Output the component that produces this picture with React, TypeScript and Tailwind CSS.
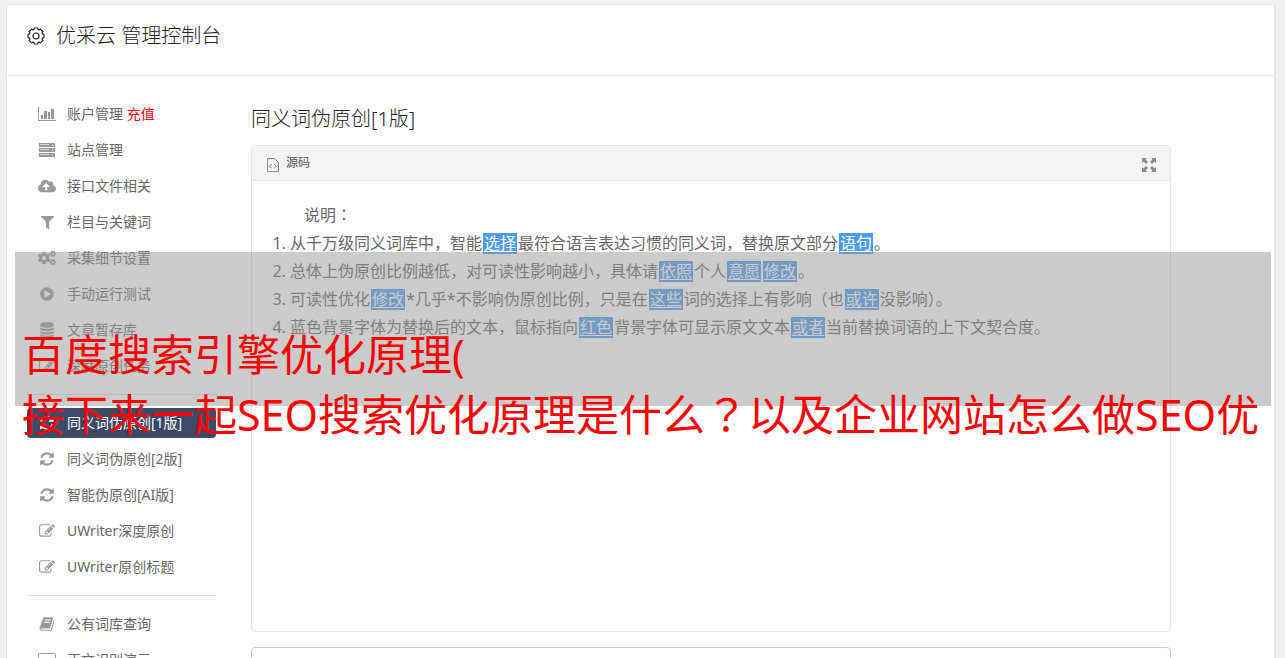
import type { ReactNode } from 'react';
import { FaCloudUploadAlt, FaCogs, FaFilter, FaPlayCircle } from 'react-icons/fa';

const EDIT_PATH =
  'M888 1184l116-116-152-152-116 116v56h96v96h56zm440-720q-16-16-33 1l-350 350q-17 17-1 33t33-1l350-350q17-17 1-33zm80 594v190q0 119-84.5 203.5t-203.5 84.5h-832q-119 0-203.5-84.5t-84.5-203.5v-832q0-119 84.5-203.5t203.5-84.5h832q63 0 117 25 15 7 18 23 3 17-9 29l-49 49q-14 14-32 8-23-6-45-6h-832q-66 0-113 47t-47 113v832q0 66 47 113t113 47h832q66 0 113-47t47-113v-126q0-13 9-22l64-64q15-15 35-7t20 29zm-96-738l288 288-672 672h-288v-288zm444 132l-92 92-288-288 92-92q28-28 68-28t68 28l152 152q28 28 28 68t-28 68z';
const REFRESH_PATH =
  'M1639 1056q0 5-1 7-64 268-268 434.5t-478 166.5q-146 0-282.5-55t-243.5-157l-129 129q-19 19-45 19t-45-19-19-45v-448q0-26 19-45t45-19h448q26 0 45 19t19 45-19 45l-137 137q71 66 161 102t187 36q134 0 250-65t186-179q11-17 53-117 8-23 30-23h192q13 0 22.5 9.5t9.5 22.5zm25-800v448q0 26-19 45t-45 19h-448q-26 0-45-19t-19-45 19-45l138-138q-148-137-349-137-134 0-250 65t-186 179q-11 17-53 117-8 23-30 23h-199q-13 0-22.5-9.5t-9.5-22.5v-7q65-268 270-434.5t480-166.5q146 0 284 55.5t245 156.5l130-129q19-19 45-19t45 19 19 45z';
const DATABASE_PATH =
  'M896 768q237 0 443-43t325-127v170q0 69-103 128t-280 93.5-385 34.5-385-34.5-280-93.5-103-128v-170q119 84 325 127t443 43zm0 768q237 0 443-43t325-127v170q0 69-103 128t-280 93.5-385 34.5-385-34.5-280-93.5-103-128v-170q119 84 325 127t443 43zm0-384q237 0 443-43t325-127v170q0 69-103 128t-280 93.5-385 34.5-385-34.5-280-93.5-103-128v-170q119 84 325 127t443 43zm0-1152q208 0 385 34.5t280 93.5 103 128v128q0 69-103 128t-280 93.5-385 34.5-385-34.5-280-93.5-103-128v-128q0-69 103-128t280-93.5 385-34.5z';
const BOOK_PATH =
  'M1703 478q40 57 18 129l-275 906q-19 64-76.5 107.5t-122.5 43.5h-923q-77 0-148.5-53.5t-99.5-131.5q-24-67-2-127 0-4 3-27t4-37q1-8-3-21.5t-3-19.5q2-11 8-21t16.5-23.5 16.5-23.5q23-38 45-91.5t30-91.5q3-10 .5-30t-.5-28q3-11 17-28t17-23q21-36 42-92t25-90q1-9-2.5-32t.5-28q4-13 22-30.5t22-22.5q19-26 42.5-84.5t27.5-96.5q1-8-3-25.5t-2-26.5q2-8 9-18t18-23 17-21q8-12 16.5-30.5t15-35 16-36 19.5-32 26.5-23.5 36-11.5 47.5 5.5l-1 3q38-9 51-9h761q74 0 114 56t18 130l-274 906q-36 119-71.5 153.5t-128.5 34.5h-869q-27 0-38 15-11 16-1 43 24 70 144 70h923q29 0 56-15.5t35-41.5l300-987q7-22 5-57 38 15 59 43zm-1064 2q-4 13 2 22.5t20 9.5h608q13 0 25.5-9.5t16.5-22.5l21-64q4-13-2-22.5t-20-9.5h-608q-13 0-25.5 9.5t-16.5 22.5zm-83 256q-4 13 2 22.5t20 9.5h608q13 0 25.5-9.5t16.5-22.5l21-64q4-13-2-22.5t-20-9.5h-608q-13 0-25.5 9.5t-16.5 22.5z';

function Glyph({ d }: { d: string }) {
  return (
    <svg className="w-4 h-4" viewBox="0 0 1792 1792" fill="currentColor" aria-hidden="true">
      <path d={d} />
    </svg>
  );
}

function GearIcon() {
  return (
    <svg className="w-[18px] h-[18px]" viewBox="0 0 18 18" fill="none" stroke="currentColor" strokeWidth="1.2" strokeLinejoin="round" aria-hidden="true">
      <path d="M7.3 1L10.7 1L11.1 2.400L12.1 2.900L13.500 2.100L15.900 4.500L15.100 5.900L15.600 6.900L17 7.300L17 10.700L15.600 11.100L15.100 12.100L15.900 13.500L13.500 15.900L12.100 15.100L11.100 15.600L10.700 17L7.300 17L6.900 15.600L5.900 15.100L4.500 15.900L2.100 13.500L2.900 12.100L2.400 11.100L1 10.700L1 7.300L2.400 6.900L2.900 5.900L2.100 4.500L4.500 2.100L5.900 2.900L6.900 2.400Z" />
      <circle cx="9" cy="9" r="3" />
    </svg>
  );
}

function ChartIcon() {
  return (
    <svg className="w-[18px] h-[14px]" viewBox="0 0 18 14" fill="currentColor" aria-hidden="true">
      <path d="M0 0h1v13h17v1H0zM3 8h2v4H3zM6 4h3v8H6zM10 5h2v7h-2zM13 2h3v10h-3z" />
    </svg>
  );
}

function ServerIcon() {
  return (
    <svg className="w-4 h-[14px]" viewBox="0 0 16 14" aria-hidden="true">
      <path fill="currentColor" d="M0 0h16v4H0zM0 5h16v4H0zM0 10h16v4H0z" />
      <path fill="#fff" fillOpacity=".6" d="M1 1h9v1H1zM1 6h9v1H1zM1 11h9v1H1zM13 1h1v2h-1zM13 6h1v2h-1zM13 11h1v2h-1z" />
    </svg>
  );
}

function LaptopIcon() {
  return (
    <svg className="w-[18px] h-4" viewBox="0 0 18 16" fill="none" stroke="currentColor" aria-hidden="true">
      <rect x=".5" y="1.5" width="17" height="11" rx="1" />
      <path d="M6 15h6" />
    </svg>
  );
}

type Item = { label: string; icon: ReactNode; badge?: string; active?: boolean };

const GROUPS: Item[][] = [
  [
    { label: '账户管理', icon: <ChartIcon />, badge: '充值' },
    { label: '站点管理', icon: <ServerIcon /> },
    { label: '接口文件相关', icon: <FaCloudUploadAlt size={18} /> },
    { label: '栏目与关键词', icon: <FaFilter size={13} /> },
    { label: '采集细节设置', icon: <FaCogs size={18} /> },
    { label: '手动运行测试', icon: <FaPlayCircle size={14} /> },
    { label: '文章暂存库', icon: <Glyph d={DATABASE_PATH} /> },
    { label: '深度原创任务', icon: <Glyph d={EDIT_PATH} /> },
  ],
  [
    { label: '同义词伪原创[1版]', icon: <Glyph d={REFRESH_PATH} />, active: true },
    { label: '同义词伪原创[2版]', icon: <Glyph d={REFRESH_PATH} /> },
    { label: '智能伪原创[AI版]', icon: <Glyph d={REFRESH_PATH} /> },
    { label: 'UWriter深度原创', icon: <Glyph d={EDIT_PATH} /> },
    { label: 'UWriter原创标题', icon: <Glyph d={EDIT_PATH} /> },
  ],
  [
    { label: '公有词库查询', icon: <Glyph d={BOOK_PATH} /> },
    { label: '正文识别演示', icon: <LaptopIcon /> },
  ],
];

function Sidebar() {
  return (
    <nav className="w-[189px] shrink-0">
      {GROUPS.map((group, i) => (
        <ul key={i} className={i > 0 ? 'border-t border-[#ddd] mt-[13px] pt-[13px] space-y-1.5' : 'space-y-1.5'}>
          {group.map(item => (
            <li key={item.label}>
              <a
                href="#"
                className={
                  item.active
                    ? 'flex items-center h-[30px] pl-2.5 gap-2.5 rounded-[4px] bg-[#3b4a66] text-white text-sm'
                    : 'flex items-center h-[30px] pl-2.5 gap-2.5 text-[#666] text-sm'
                }
              >
                <span className={item.active ? 'w-5 flex justify-center text-white' : 'w-5 flex justify-center text-[#999]'}>{item.icon}</span>
                <span>
                  {item.label}
                  {item.badge && <span className="text-[#f00]"> {item.badge}</span>}
                </span>
              </a>
            </li>
          ))}
        </ul>
      ))}
    </nav>
  );
}

function Word({ children }: { children: ReactNode }) {
  return (
    <a href="#" className="inline-block mx-px px-px leading-[21px] bg-[#4a9cf5] text-white underline underline-offset-2">
      {children}
    </a>
  );
}

// full-width mark centred in its cell
function Mark({ children }: { children: string }) {
  return <span className="font-['Noto_Sans_CJK_JP',sans-serif] leading-none">{children}</span>;
}

function Editor() {
  return (
    <section className="border border-[#e5e5e5] rounded-[4px]">
      <div className="flex items-center justify-between h-[35px] px-[15px] bg-[#f4f4f4] border-b border-[#e5e5e5] rounded-t-[4px]">
        <button type="button" className="flex items-center gap-[7px] text-xs text-[#555]">
          <svg className="w-3 h-[14px] mt-1" viewBox="0 0 12 14" fill="none" stroke="#888" aria-hidden="true">
            <path d="M.5.5h7l4 4v9H.5z" />
            <path d="M4.7 6L2.7 8.2l2 2.2M7.3 6l2 2.2-2 2.2" />
          </svg>
          源码
        </button>
        <button type="button" aria-label="全屏" className="mt-1 mr-[-2px]">
          <svg className="w-4 h-4" viewBox="0 0 16 16" fill="#888" aria-hidden="true">
            <path d="M1 1h5L4.5 2.500 7 5 5 7 2.500 4.500 1 6zM15 1v5l-1.500-1.500L11 7 9 5l2.500-2.500L10 1zM1 15v-5l1.500 1.500L5 9l2 2-2.500 2.500L6 15zM15 15h-5l1.500-1.500L9 11l2-2 2.500 2.500L15 10z" />
          </svg>
        </button>
      </div>
      <div className="min-h-[450px] px-5 py-5 text-base leading-7 text-[#666]">
        <p className="indent-8">
          说明<Mark>：</Mark>
        </p>
        <ol className="list-decimal pl-[18px]">
          <li>从千万级同义词库中，智能<Word>选择</Word>最符合语言表达习惯的同义词，替换原文部分<Word>语句</Word>。</li>
          <li>总体上伪原创比例越低，对可读性影响越小，具体请<Word>依照</Word>个人<Word>意愿</Word><Word>修改</Word>。</li>
          <li>可读性优化<Word>修改</Word>*几乎*不影响伪原创比例，只是在<Word>这些</Word>词的选择上有影响（也<Word>或许</Word>没影响）。</li>
          <li>蓝色背景字体为替换后的文本，鼠标指向<Word>红色</Word>背景字体可显示原文文本<Word>或者</Word>当前替换词语的上下文契合度。</li>
        </ol>
      </div>
    </section>
  );
}

export default function App() {
  return (
    <div className="relative h-screen overflow-hidden bg-[#f0f0f0] pt-1 pl-1.5 pr-[9px] font-['Noto_Sans','Noto_Sans_CJK_SC',sans-serif]">
      <div className="min-h-full bg-white border border-r-2 border-[#e5e5e5] rounded-t-[4px]">
        <header className="flex items-center gap-[11px] h-[71px] pl-5 pb-2 border-b border-[#e5e5e5] text-[#222]">
          <GearIcon />
          <h1 className="text-xl font-light">优采云 管理控制台</h1>
        </header>
        <div className="flex gap-[35px] pl-5 pr-[103px] pt-[23px]">
          <Sidebar />
          <main className="flex-1 min-w-0 pt-1.5">
            <h2 className="text-xl leading-7 font-light text-[#222] mb-3">同义词伪原创[1版]</h2>
            <Editor />
            <textarea aria-label="原文" className="block w-full h-40 mt-[15px] border border-[#ccc] rounded-[4px] resize-none" />
          </main>
        </div>
      </div>

      <div className="absolute top-[252px] left-[15px] right-3.5 h-[154px] bg-[#979797]/50 pt-[73px] pl-[7px]">
        <p className="text-[43px] leading-[60px] text-[#f00] whitespace-nowrap">
          百度搜索引擎优化原理(
          <br />
          接下来一起SEO搜索优化原理是什么<Mark>？</Mark>以及企业网站怎么做SEO优
        </p>
      </div>
    </div>
  );
}
